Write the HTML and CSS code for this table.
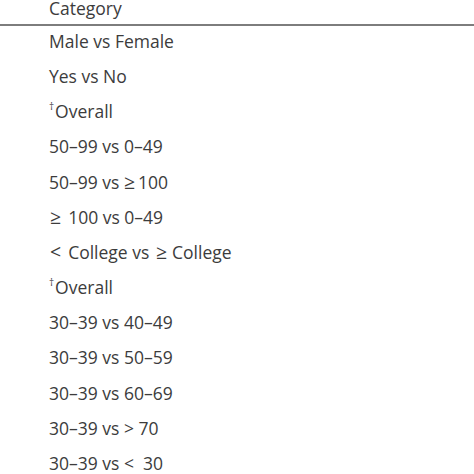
FILE: index.html
```html
<!DOCTYPE html>
<html lang="en">
<head>
<meta charset="utf-8">
<title>Category</title>
<link rel="stylesheet" href="styles.css">
</head>
<body>
<div class="table">
  <div class="head"><span class="cell">Category</span></div>
  <div class="rows">
    <div class="row"><span class="cell">Male vs Female</span></div>
    <div class="row"><span class="cell">Yes vs No</span></div>
    <div class="row"><span class="cell"><sup class="dag">†</sup>Overall</span></div>
    <div class="row"><span class="cell">50–99 vs 0–49</span></div>
    <div class="row"><span class="cell">50–99 vs <span class="op">≥</span>100</span></div>
    <div class="row"><span class="cell"><span class="op lead">≥</span>100 vs 0–49</span></div>
    <div class="row"><span class="cell"><span class="op lead">&lt;</span>College vs <span class="op mid">≥</span>College</span></div>
    <div class="row"><span class="cell"><sup class="dag">†</sup>Overall</span></div>
    <div class="row"><span class="cell">30–39 vs 40–49</span></div>
    <div class="row"><span class="cell">30–39 vs 50–59</span></div>
    <div class="row"><span class="cell">30–39 vs 60–69</span></div>
    <div class="row"><span class="cell">30–39 vs &gt; 70</span></div>
    <div class="row"><span class="cell">30–39 vs &lt;&nbsp; 30</span></div>
  </div>
</div>
</body>
</html>
```
FILE: styles.css
```css
html, body {
  margin: 0;
  padding: 0;
  background: #fff;
}
body {
  font-family: "Open Sans", "Noto Sans", sans-serif;
  font-size: 17.5px;
  color: #3c3c3c;
  overflow: hidden;
}
.table {
  display: flex;
  flex-direction: column;
  width: 474px;
}
.head {
  line-height: 17px;
  height: 17px;
  padding: 0 0 7px 49px;
  border-bottom: 2px solid #7d7d7d;
}
.rows {
  display: flex;
  flex-direction: column;
  margin-top: -1px;
}
.row {
  line-height: 32px;
  height: 32.17px;
  padding: 0 0 3px 49px;
  white-space: nowrap;
}
.op {
  display: inline-block;
  font-size: 19.5px;
  line-height: 1;
  margin-right: 3px;
}
.op.lead {
  margin-left: 1px;
  margin-right: 7px;
}
.op.mid {
  margin-left: 2px;
  margin-right: 5px;
}
.dag {
  font-size: 10px;
  line-height: 0;
  vertical-align: 8px;
  margin-right: 1px;
}
```
